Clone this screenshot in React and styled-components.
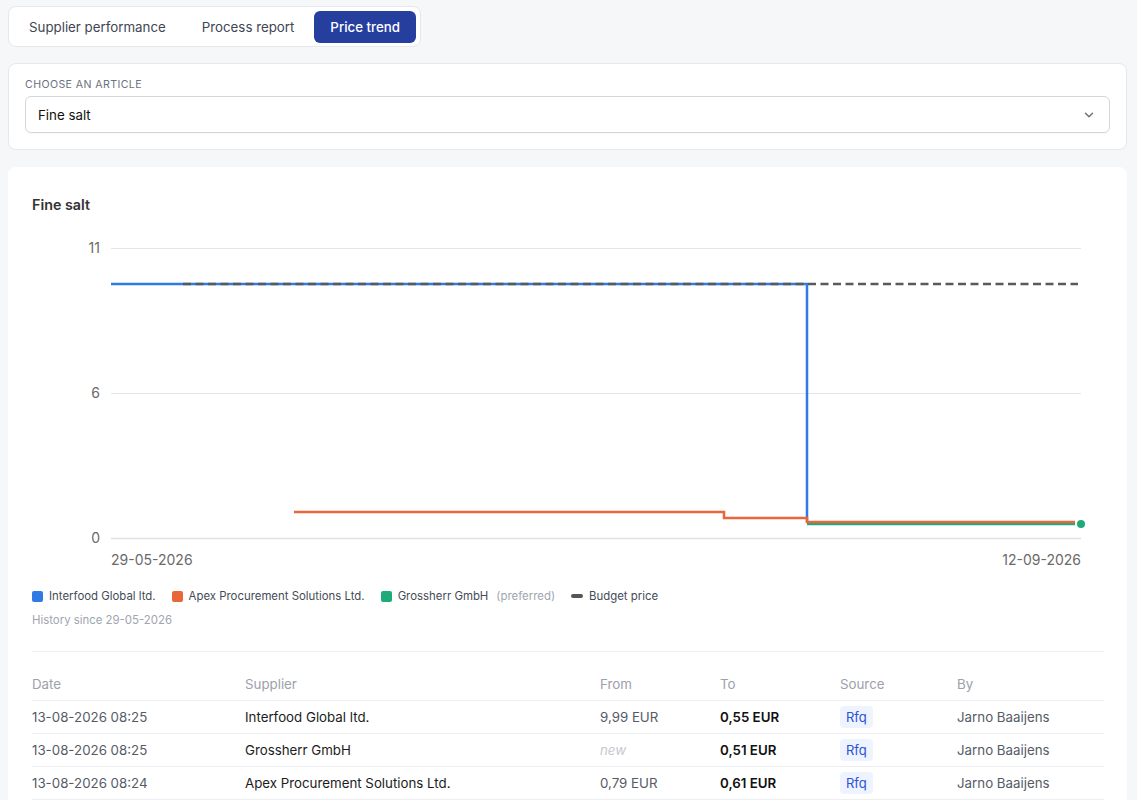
import React, { useState } from 'react'
import styled, { createGlobalStyle } from 'styled-components'

const GlobalStyle = createGlobalStyle`
  body {
    margin: 0;
    background: #f6f7f9;
    font-family: 'Inter', 'Liberation Sans', sans-serif;
    color: #222;
  }
`

const tabs = ['Supplier performance', 'Process report', 'Price trend']

const series = [
  { name: 'Interfood Global ltd.', color: '#2f7ae5' },
  { name: 'Apex Procurement Solutions Ltd.', color: '#e9663a' },
  { name: 'Grossherr GmbH', color: '#1eab79', note: '(preferred)' }
]

const rows = [
  { date: '13-08-2026 08:25', supplier: 'Interfood Global ltd.', from: '9,99 EUR', to: '0,55 EUR', by: 'Jarno Baaijens' },
  { date: '13-08-2026 08:25', supplier: 'Grossherr GmbH', from: null, to: '0,51 EUR', by: 'Jarno Baaijens' },
  { date: '13-08-2026 08:24', supplier: 'Apex Procurement Solutions Ltd.', from: '0,79 EUR', to: '0,61 EUR', by: 'Jarno Baaijens' }
]

const PriceChart = () => (
  <ChartSvg width="1072" height="345" viewBox="0 0 1072 345">
    <g stroke="#e6e6e3" strokeWidth="1">
      <line x1="79" x2="1049" y1="16.5" y2="16.5" />
      <line x1="79" x2="1049" y1="161.5" y2="161.5" />
      <line x1="79" x2="1049" y1="306.5" y2="306.5" stroke="#e2e1dc" strokeWidth="1.5" />
    </g>
    <g fill="#6a6a6a" fontSize="14" textAnchor="end">
      <text x="68" y="21">11</text>
      <text x="68" y="166">6</text>
      <text x="68" y="311">0</text>
    </g>
    <g fill="#6a6a6a" fontSize="14">
      <text x="79" y="333">29-05-2026</text>
      <text x="1049" y="333" textAnchor="end">12-09-2026</text>
    </g>
    <g fill="none" strokeWidth="2.5">
      <path d="M79,52 H775 V290" stroke="#2f7ae5" />
      <path d="M151,52 H1046" stroke="#5a5a57" strokeDasharray="8 4.5" />
      <path d="M775,292 H1043" stroke="#1eab79" />
      <path d="M262,280 H692 V286 H775 V290 H1043" stroke="#e9663a" />
    </g>
    <circle cx="1049" cy="292" r="4" fill="#1eab79" />
  </ChartSvg>
)

const App = () => {
  const [active, setActive] = useState(2)

  return (
    <Page>
      <GlobalStyle />
      <TabBar>
        {tabs.map((t, i) => (
          <Tab key={t} active={i === active} onClick={() => setActive(i)}>
            {t}
          </Tab>
        ))}
      </TabBar>

      <Card>
        <FieldLabel>Choose an article</FieldLabel>
        <Select>
          <span>Fine salt</span>
          <svg width="14" height="14" viewBox="0 0 24 24" fill="none" stroke="#6b7280" strokeWidth="2.5" strokeLinecap="round" strokeLinejoin="round">
            <path d="M6 9l6 6 6-6" />
          </svg>
        </Select>
      </Card>

      <ChartCard>
        <Title>Fine salt</Title>
        <PriceChart />

        <Legend>
          {series.map(s => (
            <LegendItem key={s.name}>
              <Swatch color={s.color} />
              {s.name}
              {s.note && <Muted>{s.note}</Muted>}
            </LegendItem>
          ))}
          <LegendItem>
            <DashSwatch />
            Budget price
          </LegendItem>
        </Legend>
        <History>History since 29-05-2026</History>

        <Divider />

        <Table>
          <thead>
            <tr>
              <Th width="213">Date</Th>
              <Th width="355">Supplier</Th>
              <Th width="120">From</Th>
              <Th width="120">To</Th>
              <Th width="117">Source</Th>
              <Th>By</Th>
            </tr>
          </thead>
          <tbody>
            {rows.map((r, i) => (
              <tr key={i}>
                <Td tone="soft">{r.date}</Td>
                <Td>{r.supplier}</Td>
                <Td tone="soft">{r.from || <New>new</New>}</Td>
                <Td strong>{r.to}</Td>
                <Td><Badge>Rfq</Badge></Td>
                <Td tone="soft">{r.by}</Td>
              </tr>
            ))}
          </tbody>
        </Table>
      </ChartCard>
    </Page>
  )
}

const Page = styled.div`
  padding: 6px 10px 0 8px;
  display: flex;
  flex-direction: column;
  align-items: flex-start;
  gap: 16px;
`

const TabBar = styled.div`
  box-sizing: border-box;
  height: 41px;
  display: flex;
  align-items: center;
  gap: 4px;
  padding: 0 4px;
  background: #fff;
  border: 1px solid #e6e8ec;
  border-radius: 8px;
`

const Tab = styled.button`
  height: 32px;
  padding: 0 16px;
  border: none;
  border-radius: 6px;
  font-family: inherit;
  font-size: 13.3px;
  font-weight: ${p => (p.active ? 500 : 400)};
  background: ${p => (p.active ? '#263f9f' : 'transparent')};
  color: ${p => (p.active ? '#fff' : '#3f4654')};
  cursor: pointer;
`

const Card = styled.div`
  align-self: stretch;
  box-sizing: border-box;
  height: 87px;
  background: #fff;
  border: 1px solid #e6e8ec;
  border-radius: 8px;
  padding: 14px 16px 16px;
`

const FieldLabel = styled.div`
  font-size: 10.6px;
  line-height: 14px;
  letter-spacing: 0.4px;
  text-transform: uppercase;
  color: #6b7280;
  margin-bottom: 4px;
`

const Select = styled.div`
  height: 37px;
  box-sizing: border-box;
  display: flex;
  align-items: center;
  justify-content: space-between;
  padding: 0 13px 0 12px;
  border: 1px solid #d3d6dd;
  border-radius: 6px;
  font-size: 13.3px;
  color: #111;
  box-shadow: 0 1px 1px rgba(0, 0, 0, 0.03);
`

const ChartCard = styled.div`
  align-self: stretch;
  margin-top: 1px;
  background: #fff;
  border-radius: 8px;
  padding: 29px 23px 0 24px;
  height: 640px;
`

const Title = styled.div`
  font-size: 14.3px;
  line-height: 18px;
  font-weight: 600;
  color: #333;
  margin-bottom: 18px;
`

const ChartSvg = styled.svg`
  display: block;
  font-family: 'Inter', 'Liberation Sans', sans-serif;
`

const Legend = styled.div`
  display: flex;
  gap: 16px;
  margin-top: 12px;
  font-size: 11.4px;
  color: #454b57;
`

const LegendItem = styled.div`
  display: flex;
  align-items: center;
  gap: 6px;
`

const Swatch = styled.span`
  width: 11px;
  height: 11px;
  border-radius: 2px;
  background: ${p => p.color};
`

const DashSwatch = styled.span`
  width: 12px;
  height: 4px;
  border-radius: 2px;
  background: #555;
`

const Muted = styled.span`
  color: #a0a5b0;
  margin-left: 2px;
`

const History = styled.div`
  font-size: 11.4px;
  color: #a0a5b0;
  margin-top: 10px;
`

const Divider = styled.div`
  height: 1px;
  background: #eceef1;
  margin: 24px 0 16px;
`

const Table = styled.table`
  width: 100%;
  border-collapse: collapse;
  font-size: 13.3px;

  tr {
    border-bottom: 1px solid #eceef1;
  }
`

const Th = styled.th`
  text-align: left;
  font-weight: 400;
  color: #9ca1ab;
  height: 32px;
  padding: 0;
  width: ${p => (p.width ? `${p.width}px` : 'auto')};
`

const Td = styled.td`
  height: 32px;
  padding: 0;
  color: ${p => (p.strong ? '#111' : p.tone === 'soft' ? '#555b66' : '#1c1c1c')};
  font-weight: ${p => (p.strong ? 600 : 400)};
`

const New = styled.span`
  font-style: italic;
  color: #c6c9cf;
`

const Badge = styled.span`
  display: inline-block;
  padding: 3px 6px;
  border-radius: 4px;
  background: #eef4ff;
  color: #2d51d6;
  font-size: 13px;
`

export default App
